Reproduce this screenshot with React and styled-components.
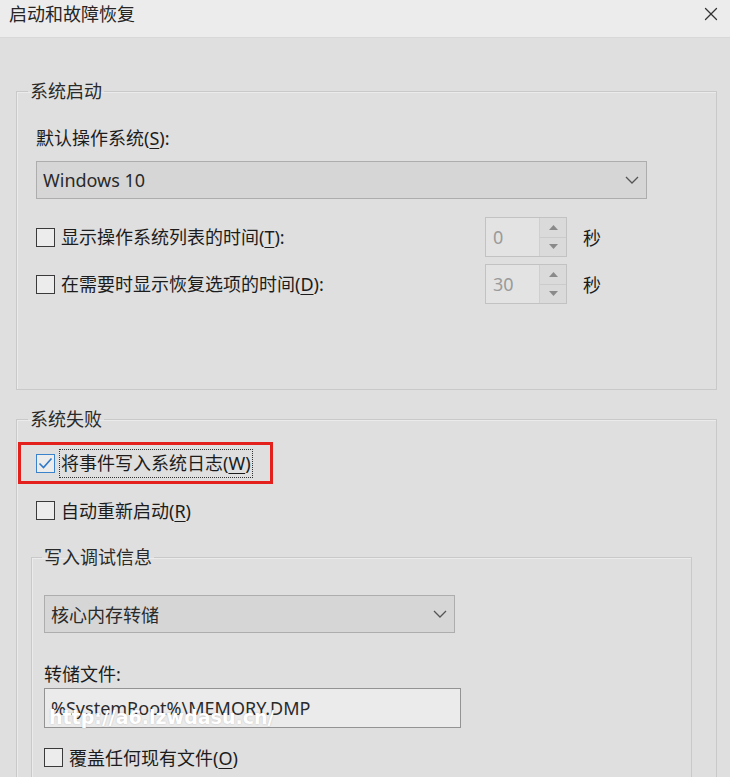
import React from "react";
import styled, { createGlobalStyle } from "styled-components";
import { X } from "lucide-react";

const GlobalStyle = createGlobalStyle`
  body {
    margin: 0;
    background: #dfdfdf;
  }
  * {
    box-sizing: border-box;
  }
`

const Dialog = styled.div`
  position: relative;
  width: 730px;
  height: 777px;
  overflow: hidden;
  background: #dfdfdf;
  color: #1c1c1c;
  font-family: "Noto Sans", "Noto Sans CJK SC", sans-serif;
  font-size: 18px;
`
const TitleBar = styled.div`
  display: flex;
  justify-content: space-between;
  align-items: flex-start;
  height: 38px;
  padding: 3px 8px 0 9px;
  background: #ececec;
  border-bottom: 1px solid #d8d8d8;
`
const Title = styled.div`
  line-height: 22px;
  color: #262626;
`
const CloseButton = styled.div`
  display: flex;
  color: #333;
`
const Body = styled.div`
  padding: 0 13px 0 16px;
`
// 分组框
const Group = styled.fieldset`
  margin: ${(p) => p.$margin || "0"};
  padding: ${(p) => p.$padding || "0 19px 0 19px"};
  min-width: 0;
  border: 1px solid #c9c9c9;
  box-shadow: inset 1px 1px 0 #ebebeb;
`
const Legend = styled.legend`
  margin-left: ${(p) => p.$shift || "-8px"};
  padding: 0 2px;
  line-height: 22px;
  color: #2a2a2a;
`
const FieldLabel = styled.div`
  margin-top: ${(p) => p.$top || "0"};
  line-height: 24px;
`
const Select = styled.div`
  display: flex;
  align-items: center;
  justify-content: space-between;
  width: ${(p) => p.$width};
  height: 38px;
  margin-top: ${(p) => p.$top || "0"};
  padding: 0 7px 0 6px;
  background: #d6d6d6;
  border: 1px solid #adadad;
  color: #2a2a2a;
`
const TextInput = styled.div`
  display: flex;
  align-items: center;
  width: ${(p) => p.$width};
  height: 40px;
  margin-top: ${(p) => p.$top || "0"};
  padding: 0 6px;
  background: #ebebeb;
  border: 1px solid #939393;
  color: #2a2a2a;
`
const TimeRow = styled.div`
  display: grid;
  grid-template-columns: 449px 82px auto;
  align-items: center;
  margin-top: ${(p) => p.$top || "0"};
`
const CheckRow = styled.div`
  display: flex;
  align-items: center;
  gap: 6px;
  height: 25px;
  margin-top: ${(p) => p.$top || "0"};
`
const CheckBox = styled.span`
  display: flex;
  align-items: center;
  justify-content: center;
  flex: none;
  width: 19px;
  height: 19px;
  background: #ececec;
  border: 1px solid ${(p) => (p.$checked ? "#3b82cc" : "#3a3a3a")};
  color: #2f78c8;
`
const CheckText = styled.span`
  line-height: ${(p) => (p.$focused ? "27px" : "26px")};
  padding: 0 1px;
  margin-left: -2px;
  border: 1px dotted ${(p) => (p.$focused ? "#333" : "transparent")};
`
const Key = styled.span`
  text-decoration: underline;
  text-underline-offset: 3px;
`
const Highlight = styled.div`
  display: flex;
  align-items: center;
  width: 255px;
  height: 42px;
  margin: 12px 0 0 -18px;
  padding-left: 15px;
  border: 3px solid #e3201c;
`
const Spin = styled.div`
  display: flex;
  height: 40px;
  border: 1px solid #c2c2c2;
  background: #e3e3e3;
`
const SpinValue = styled.div`
  flex: 1;
  display: flex;
  align-items: center;
  padding-left: 7px;
  color: #9a9a9a;
`
const SpinButtons = styled.div`
  display: flex;
  flex-direction: column;
  width: 27px;
  border-left: 1px solid #cfcfcf;
  background: #dadada;
`
const SpinButton = styled.div`
  flex: 1;
  display: flex;
  align-items: center;
  justify-content: center;
  border-top: ${(p) => (p.$down ? "1px solid #cbcbcb" : "none")};
  color: #8a8a8a;
`
const Unit = styled.span`
  margin-left: 16px;
`
// 水印
const Watermark = styled.div`
  position: absolute;
  left: 49px;
  top: 706px;
  color: #ffffff;
  font-family: "DejaVu Sans", Verdana, sans-serif;
  font-weight: bold;
  font-size: 19px;
  text-shadow: 0 0 2px rgba(0, 0, 0, 0.2);
`

function Chevron() {
  return (
    <svg width="14" height="8" viewBox="0 0 14 8">
      <polyline points="1,1 7,7 13,1" fill="none" stroke="#555" strokeWidth="1.3" />
    </svg>
  );
}

function Check() {
  return (
    <svg width="15" height="13" viewBox="0 0 15 13">
      <polyline points="1.5,6.5 5.5,10.5 13.5,1.5" fill="none" stroke="currentColor" strokeWidth="1.6" />
    </svg>
  );
}

function Arrow({ down }) {
  return (
    <svg width="9" height="5" viewBox="0 0 9 5">
      <polygon points={down ? "0,0 9,0 4.5,5" : "0,5 9,5 4.5,0"} fill="currentColor" />
    </svg>
  );
}

function Spinner({ value }) {
  return (
    <Spin>
      <SpinValue>{value}</SpinValue>
      <SpinButtons>
        <SpinButton><Arrow /></SpinButton>
        <SpinButton $down><Arrow down /></SpinButton>
      </SpinButtons>
    </Spin>
  );
}

export default function App() {
  return (
    <Dialog>
      <GlobalStyle />
      <TitleBar>
        <Title>启动和故障恢复</Title>
        <CloseButton>
          <X size={22} strokeWidth={1.4} />
        </CloseButton>
      </TitleBar>
      <Body>
        <Group $margin="42px 0 0 0" $padding="0 19px 85px 19px">
          <Legend>系统启动</Legend>
          <FieldLabel $top="24px">默认操作系统(<Key>S</Key>):</FieldLabel>
          <Select $width="611px" $top="11px">
            <span>Windows 10</span>
            <Chevron />
          </Select>
          <TimeRow $top="18px">
            <CheckRow>
              <CheckBox />
              <CheckText>显示操作系统列表的时间(<Key>T</Key>):</CheckText>
            </CheckRow>
            <Spinner value="0" />
            <Unit>秒</Unit>
          </TimeRow>
          <TimeRow $top="7px">
            <CheckRow>
              <CheckBox />
              <CheckText>在需要时显示恢复选项的时间(<Key>D</Key>):</CheckText>
            </CheckRow>
            <Spinner value="30" />
            <Unit>秒</Unit>
          </TimeRow>
        </Group>

        <Group $margin="18px 0 0 0" $padding="0 19px 200px 19px">
          <Legend>系统失败</Legend>
          <Highlight>
            <CheckRow>
              <CheckBox $checked><Check /></CheckBox>
              <CheckText $focused>将事件写入系统日志(<Key>W</Key>)</CheckText>
            </CheckRow>
          </Highlight>
          <CheckRow $top="14px">
            <CheckBox />
            <CheckText>自动重新启动(<Key>R</Key>)</CheckText>
          </CheckRow>
          <Group $margin="23px 5px 0 -5px" $padding="0 12px 100px 12px">
            <Legend $shift="-2px">写入调试信息</Legend>
            <Select $width="411px" $top="27px">
              <span>核心内存转储</span>
              <Chevron />
            </Select>
            <FieldLabel $top="29px">转储文件:</FieldLabel>
            <TextInput $width="417px" $top="2px">%SystemRoot%\MEMORY.DMP</TextInput>
            <CheckRow $top="17px">
              <CheckBox />
              <CheckText>覆盖任何现有文件(<Key>O</Key>)</CheckText>
            </CheckRow>
          </Group>
        </Group>
      </Body>
      <Watermark>http://a6.lzwdasu.cn/</Watermark>
    </Dialog>
  );
}
